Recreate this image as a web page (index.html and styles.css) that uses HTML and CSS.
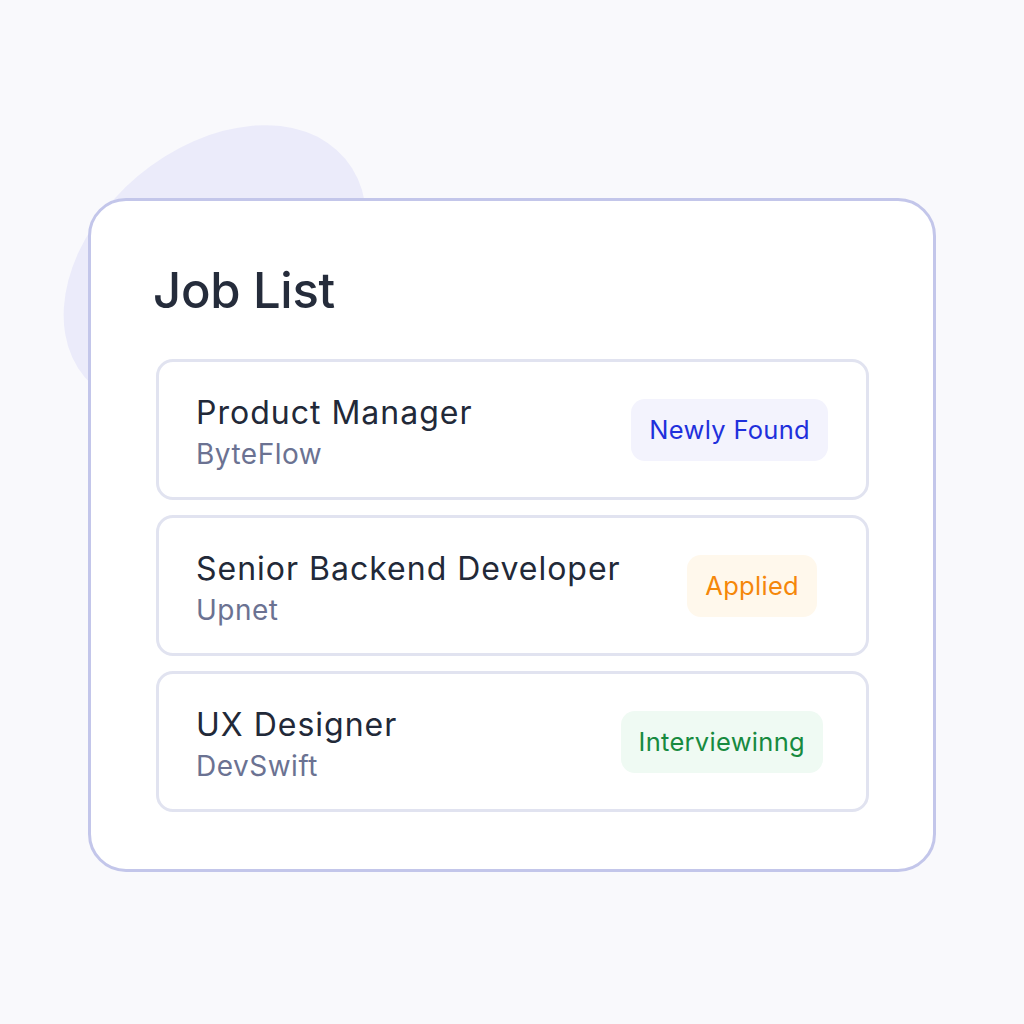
FILE: index.html
```html
<!DOCTYPE html>
<html lang="en">
<head>
<meta charset="utf-8">
<title>Job List</title>
<link rel="stylesheet" href="styles.css">
</head>
<body>
<div class="stage">
  <div class="blob"></div>
  <section class="card">
    <h1 class="title">Job List</h1>
    <div class="list">
      <div class="row">
        <div class="info">
          <div class="role">Product Manager</div>
          <div class="company">ByteFlow</div>
        </div>
        <span class="badge badge-new">Newly Found</span>
      </div>
      <div class="row">
        <div class="info">
          <div class="role">Senior Backend Developer</div>
          <div class="company">Upnet</div>
        </div>
        <span class="badge badge-applied">Applied</span>
      </div>
      <div class="row">
        <div class="info">
          <div class="role">UX Designer</div>
          <div class="company">DevSwift</div>
        </div>
        <span class="badge badge-interview">Interviewinng</span>
      </div>
    </div>
  </section>
</div>
</body>
</html>
```
FILE: styles.css
```css
* { box-sizing: border-box; }
html, body {
  margin: 0;
  padding: 0;
  background: #f9f9fc;
  font-family: Inter, "Noto Sans", "Liberation Sans", sans-serif;
}
.stage {
  position: relative;
  width: 1024px;
  height: 1024px;
  padding: 198px 88px 0 88px;
}
.blob {
  position: absolute;
  left: 45px;
  top: 148px;
  width: 340px;
  height: 240px;
  background: #ebebfa;
  border-radius: 50%;
  transform: rotate(-40deg);
}
.card {
  position: relative;
  width: 848px;
  height: 674px;
  background: #ffffff;
  border: 3px solid #c3c6ea;
  border-radius: 38px;
  padding: 0 64px 0 65px;
}
.title {
  margin: 60px 0 0 -3px;
  font-size: 49px;
  font-weight: 500;
  color: #252c3b;
  letter-spacing: -0.3px;
  line-height: 60px;
}
.list {
  margin-top: 38px;
  display: flex;
  flex-direction: column;
  gap: 15px;
}
.row {
  height: 141px;
  border: 3px solid #e1e3f0;
  border-radius: 17px;
  display: flex;
  align-items: center;
  justify-content: space-between;
  padding: 0 38px 0 37px;
}
.info {
  display: flex;
  flex-direction: column;
  gap: 6px;
  margin-top: 4px;
}
.role {
  font-size: 32px;
  font-weight: 400;
  color: #222938;
  line-height: 38px;
  letter-spacing: 1px;
}
.company {
  font-size: 28px;
  color: #6b7292;
  line-height: 32px;
  letter-spacing: 0.5px;
}
.badge {
  height: 62px;
  border-radius: 14px;
  display: flex;
  align-items: center;
  font-size: 25.5px;
  padding: 0 18px;
  letter-spacing: 0.3px;
}
.badge-new {
  background: #f3f3fd;
  color: #1f30dc;
}
.badge-applied {
  background: #fff8ec;
  color: #f5870a;
  margin-right: 11px;
}
.badge-interview {
  background: #effaf3;
  color: #178a40;
  margin-right: 5px;
}
```
